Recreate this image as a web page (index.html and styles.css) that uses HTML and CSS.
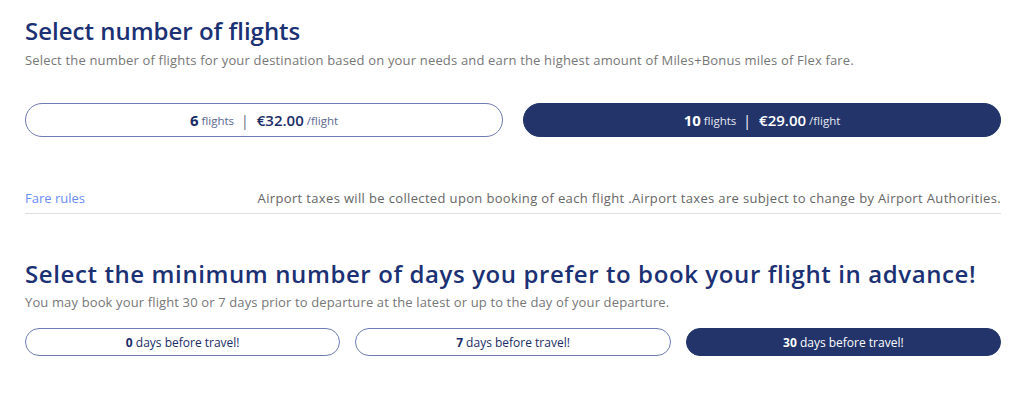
FILE: index.html
```html
<!DOCTYPE html>
<html lang="en">
<head>
<meta charset="utf-8">
<title>Select number of flights</title>
<link rel="stylesheet" href="styles.css">
</head>
<body>
<main class="page">
  <section class="block">
    <h2 class="title">Select number of flights</h2>
    <p class="subtitle">Select the number of flights for your destination based on your needs and earn the highest amount of Miles+Bonus miles of Flex fare.</p>
    <div class="options two">
      <button class="opt big"><b>6</b><span class="unit">flights</span><span class="sep">|</span><span class="price">€32.00</span><span class="unit">/flight</span></button>
      <button class="opt big active"><b>10</b><span class="unit">flights</span><span class="sep">|</span><span class="price">€29.00</span><span class="unit">/flight</span></button>
    </div>
    <div class="rules">
      <a class="rules-link" href="#">Fare rules</a>
      <span class="rules-note">Airport taxes will be collected upon booking of each flight .Airport taxes are subject to change by Airport Authorities.</span>
    </div>
  </section>
  <section class="block second">
    <h2 class="title wide">Select the minimum number of days you prefer to book your flight in advance!</h2>
    <p class="subtitle">You may book your flight 30 or 7 days prior to departure at the latest or up to the day of your departure.</p>
    <div class="options three">
      <button class="opt small"><span><b>0</b> days before travel!</span></button>
      <button class="opt small"><span><b>7</b> days before travel!</span></button>
      <button class="opt small active"><span><b>30</b> days before travel!</span></button>
    </div>
  </section>
</main>
</body>
</html>
```
FILE: styles.css
```css
* { box-sizing: border-box; }
html, body { margin: 0; background: #fff; }
body { font-family: "Open Sans", Lato, sans-serif; color: #333; }
.page { padding: 17px 23px 0 25px; width: 1024px; }
.title {
  margin: 0;
  font-size: 24px;
  font-weight: 600;
  color: #1b3174;
  line-height: 28px;
}
.title.wide { letter-spacing: 0.6px; }
.subtitle {
  margin: 6px 0 0;
  font-size: 13px;
  line-height: 18px;
  color: #777;
  letter-spacing: 0.17px;
}
.options { display: grid; }
.options.two { grid-template-columns: 1fr 1fr; gap: 20px; margin-top: 34px; }
.options.three { grid-template-columns: 1fr 1fr 1fr; gap: 15px; margin-top: 17px; }
.opt {
  font-family: inherit;
  background: #fff;
  border: 1px solid #6f7db0;
  border-radius: 17px;
  color: #1b2d66;
  display: flex;
  align-items: center;
  justify-content: center;
  cursor: pointer;
  padding: 0;
}
.opt.big { height: 34px; font-size: 15px; }
.opt.small { height: 28px; font-size: 12px; border-radius: 14px; }
.opt b { font-weight: 700; }
.opt.active { background: #22346a; border-color: #22346a; color: #fff; }
.unit { font-size: 11.5px; color: #5a6791; margin-left: 3px; }
.active .unit { color: #e6e9f2; }
.sep { margin: 0 8px 0 7px; font-size: 14px; color: #5c6480; }
.active .sep { color: #fff; }
.price { font-weight: 600; }
.rules {
  display: flex;
  justify-content: space-between;
  align-items: baseline;
  margin-top: 52px;
  padding-bottom: 6px;
  border-bottom: 1px solid #ddd;
  font-size: 13px;
  line-height: 18px;
}
.rules-link { color: #6b8cf5; text-decoration: none; }
.rules-note { color: #666; letter-spacing: 0.35px; }
.second { margin-top: 46px; }
.second .subtitle { margin-top: 5px; letter-spacing: 0.13px; }
```
